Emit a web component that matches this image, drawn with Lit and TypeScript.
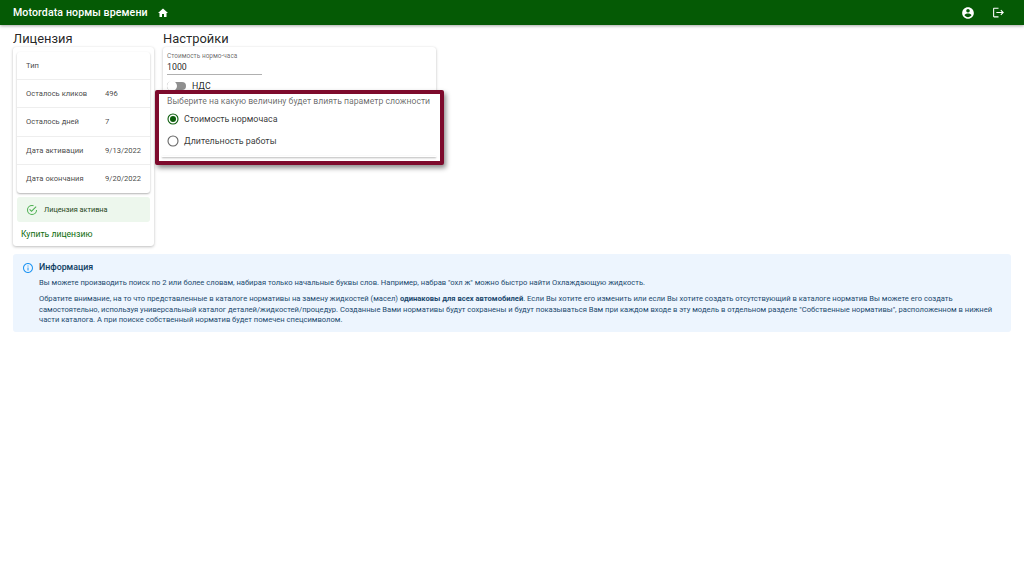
import { LitElement, html, css } from "lit";
import { customElement } from "lit/decorators.js";

@customElement("app-root")
export class AppRoot extends LitElement {
  static styles = css`
    :host { display: block; width: 1024px; height: 576px; background: #fff; font-family: Roboto, sans-serif; color: rgba(0,0,0,.87); overflow: hidden; position: relative; }
    .bar { height: 25px; background: #055a05; color: #fff; display: flex; align-items: center; padding: 0 19px 0 13px; box-shadow: 0 1px 3px rgba(0,0,0,.35); box-sizing: border-box; }
    .brand { font-size: 10.6px; font-weight: 500; letter-spacing: .1px; margin-right: 9px; }
    .spacer { flex: 1; }
    .bar svg { display: block; fill: #fff; }
    .acct { margin-right: 17px; }
    .main { display: flex; padding: 6px 13px 0; gap: 9px; }
    h2 { font-size: 12.9px; font-weight: 400; margin: 0; line-height: 16px; height: 16px; }
    .lic { width: 141px; }
    .set { width: 273px; }
    .card { background: #fff; border-radius: 3px; box-shadow: 0 1px 3px rgba(0,0,0,.25), 0 0 1px rgba(0,0,0,.08); }
    .lic .card { padding: 5px 4px 0; height: 199px; box-sizing: border-box; }
    .table { border-radius: 3px; box-shadow: 0 1px 2px rgba(0,0,0,.3); height: 141px; display: grid; grid-template-rows: repeat(5, 1fr); }
    .row { display: grid; grid-template-columns: 79px 1fr; align-items: center; padding-left: 9px; font-size: 7.6px; color: rgba(0,0,0,.75); border-bottom: 1px solid #eee; }
    .row:last-child { border-bottom: 0; }
    .alert { margin-top: 4px; height: 25px; background: #edf7ed; border-radius: 3px; display: flex; align-items: center; padding-left: 9px; gap: 6px; font-size: 7.3px; color: #1e4620; }
    .alert svg { fill: #4caf50; display: block; }
    .buy { display: block; margin: 7px 0 0 0; padding-left: 4px; font-size: 8.6px; color: #0b6b0b; line-height: 11px; letter-spacing: .02px; }
    .set .card { height: 110px; padding: 5px 4px; box-sizing: border-box; }
    .fld { width: 95px; height: 22px; border-bottom: 1px solid #b0b0b0; }
    .fld small { display: block; font-size: 6.5px; color: rgba(0,0,0,.6); line-height: 8px; }
    .fld div { font-size: 8.8px; line-height: 12px; margin-top: 1px; }
    .sw { display: flex; align-items: center; margin-top: 4px; height: 14px; font-size: 8.8px; gap: 6px; }
    .track { width: 19px; height: 8px; border-radius: 4px; background: #8f8f8f; position: relative; }
    .thumb { position: absolute; left: 0; top: -1px; width: 10px; height: 10px; border-radius: 50%; background: #fff; box-shadow: 0 0 1px rgba(0,0,0,.12); }
    .hl { position: absolute; left: 155px; top: 90px; width: 289px; height: 75px; box-sizing: border-box; border: 4px solid #7d0a2c; border-radius: 2px; box-shadow: 2px 3px 5px rgba(0,0,0,.45); background: #fff; padding: 2px 0 0 8px; }
    .hl .inner { position: absolute; left: 3px; right: 4px; bottom: 4px; height: 1px; box-shadow: 0 1px 2px rgba(0,0,0,.4); }
    .q { font-size: 8.67px; color: rgba(0,0,0,.6); line-height: 11px; white-space: nowrap; }
    .radio { display: flex; align-items: center; gap: 5px; font-size: 8.9px; height: 22px; color: rgba(0,0,0,.8); }
    .radio svg { display: block; }
    .radios { margin-top: 1px; }
    .info { margin: 8px 13px 0; height: 78px; box-sizing: border-box; background: #edf5fe; border-radius: 3px; padding: 8px 9px; display: flex; gap: 5px; color: #1c4a6e; }
    .info svg { fill: #2196f3; display: block; flex: none; }
    .info h4 { margin: 0 0 5px; font-size: 8.8px; font-weight: 500; line-height: 11px; color: #0d3c61; }
    .info p { margin: 0 0 5px; font-size: 7.6px; line-height: 10.8px; }
  `;

  render() {
    const rows = [["Тип", ""], ["Осталось кликов", "496"], ["Осталось дней", "7"], ["Дата активации", "9/13/2022"], ["Дата окончания", "9/20/2022"]];
    return html`
      <div class="bar">
        <span class="brand">Motordata нормы времени</span>
        <svg width="12" height="12" viewBox="0 0 24 24"><path d="M10 20v-6h4v6h5v-8h3L12 3 2 12h3v8z"/></svg>
        <span class="spacer"></span>
        <svg class="acct" width="14" height="14" viewBox="0 0 24 24"><path d="M12 2C6.48 2 2 6.48 2 12s4.48 10 10 10 10-4.48 10-10S17.52 2 12 2zm0 3c1.66 0 3 1.34 3 3s-1.34 3-3 3-3-1.34-3-3 1.34-3 3-3zm0 14.2c-2.5 0-4.71-1.28-6-3.22.03-1.99 4-3.08 6-3.08 1.99 0 5.97 1.09 6 3.08-1.29 1.94-3.5 3.22-6 3.22z"/></svg>
        <svg width="13" height="13" viewBox="0 0 24 24"><path d="M17 7l-1.41 1.41L18.17 11H8v2h10.17l-2.58 2.58L17 17l5-5zM4 5h8V3H4c-1.1 0-2 .9-2 2v14c0 1.1.9 2 2 2h8v-2H4V5z"/></svg>
      </div>
      <div class="main">
        <div class="lic">
          <h2>Лицензия</h2>
          <div class="card">
            <div class="table">
              ${rows.map(([a, b]) => html`<div class="row"><span>${a}</span><span>${b}</span></div>`)}
            </div>
            <div class="alert">
              <svg width="12" height="12" viewBox="0 0 24 24"><path d="M20 12a8 8 0 0 1-8 8 8 8 0 0 1-8-8 8 8 0 0 1 8-8c.76 0 1.5.11 2.2.31l1.57-1.57A9.8 9.8 0 0 0 12 2 10 10 0 0 0 2 12a10 10 0 0 0 10 10 10 10 0 0 0 10-10M7.91 10.08 6.5 11.5 11 16 21 6l-1.41-1.42L11 13.17z"/></svg>
              <span>Лицензия активна</span>
            </div>
            <span class="buy">Купить лицензию</span>
          </div>
        </div>
        <div class="set">
          <h2>Настройки</h2>
          <div class="card">
            <div class="fld"><small>Стоимость нормо-часа</small><div>1000</div></div>
            <div class="sw"><span class="track"><span class="thumb"></span></span><span>НДС</span></div>
          </div>
        </div>
      </div>
      <div class="info">
        <svg width="12" height="12" viewBox="0 0 24 24"><path d="M11 7h2v2h-2zm0 4h2v6h-2zm1-9C6.48 2 2 6.48 2 12s4.48 10 10 10 10-4.48 10-10S17.52 2 12 2zm0 18c-4.41 0-8-3.59-8-8s3.59-8 8-8 8 3.59 8 8-3.59 8-8 8z"/></svg>
        <div>
          <h4>Информация</h4>
          <p>Вы можете производить поиск по 2 или более словам, набирая только начальные буквы слов. Например, набрав "охл ж" можно быстро найти Охлаждающую жидкость.</p>
          <p>Обратите внимание, на то что представленные в каталоге нормативы на замену жидкостей (масел) <b>одинаковы для всех автомобилей</b>. Если Вы хотите его изменить или если Вы хотите создать отсутствующий в каталоге норматив Вы можете его создать самостоятельно, используя универсальный каталог деталей/жидкостей/процедур. Созданные Вами нормативы будут сохранены и будут показываться Вам при каждом входе в эту модель в отдельном разделе "Собственные нормативы", расположенном в нижней части каталога. А при поиске собственный норматив будет помечен спецсимволом.</p>
        </div>
      </div>
      <div class="hl">
        <div class="q">Выберите на какую величину будет влиять параметр сложности</div>
        <div class="radios">
          <div class="radio"><svg width="12" height="12" viewBox="0 0 12 12"><circle cx="6" cy="6" r="5" fill="none" stroke="#0a5c0a" stroke-width="1.1"/><circle cx="6" cy="6" r="3" fill="#0a5c0a"/></svg>Стоимость нормочаса</div>
          <div class="radio"><svg width="12" height="12" viewBox="0 0 12 12"><circle cx="6" cy="6" r="5" fill="none" stroke="#666" stroke-width="1.1"/></svg>Длительность работы</div>
        </div>
        <div class="inner"></div>
      </div>
    `;
  }
}
